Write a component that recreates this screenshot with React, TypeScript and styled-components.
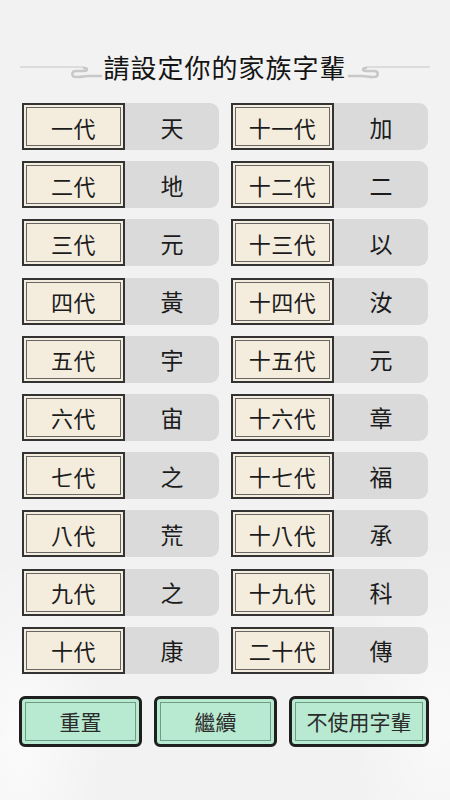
import React from "react";
import styled, { createGlobalStyle } from "styled-components";

const GlobalStyle = createGlobalStyle`
  html, body {
    margin: 0;
    padding: 0;
    background: #f2f2f2;
  }
  body {
    font-family: "Noto Sans CJK TC", "Noto Sans CJK SC", "Noto Sans", sans-serif;
  }
`;

const Page = styled.div`
  width: 450px;
  height: 800px;
  overflow: hidden;
  background:
    radial-gradient(ellipse 120px 260px at 20px 740px, rgba(255, 255, 255, 0.7), transparent 70%),
    radial-gradient(ellipse 120px 260px at 440px 720px, rgba(255, 255, 255, 0.6), transparent 70%),
    #f2f2f2;
  display: flex;
  flex-direction: column;
  align-items: center;
`;

const Header = styled.div`
  margin-top: 50px;
  height: 34px;
  width: 410px;
  display: flex;
  align-items: center;
  justify-content: space-between;
`;

const Title = styled.h1`
  margin: 0;
  font-size: 26px;
  font-weight: 400;
  letter-spacing: 1px;
  line-height: 34px;
  color: #141414;
  white-space: nowrap;
`;

const Grid = styled.div`
  margin-top: 19px;
  width: 406px;
  display: grid;
  grid-template-columns: 197px 197px;
  column-gap: 12px;
  row-gap: 11.2px;
`;

const Row = styled.div`
  height: 47px;
  display: flex;
  background: #dadada;
  border-radius: 0 9px 9px 0;
`;

const Label = styled.div`
  width: 103px;
  box-sizing: border-box;
  flex-shrink: 0;
  display: flex;
  align-items: center;
  justify-content: center;
  background: #f4eddd;
  border: 2px solid #333;
  box-shadow: inset 0 0 0 2px #f4eddd, inset 0 0 0 3px #666;
  font-size: 22px;
  color: #1c1c1c;
  letter-spacing: 0.5px;
`;

const Value = styled.div`
  flex: 1;
  display: flex;
  align-items: center;
  justify-content: center;
  font-size: 23px;
  color: #1c1c1c;
`;

const Actions = styled.div`
  margin-top: 22px;
  width: 412px;
  display: flex;
  gap: 12px;
`;

const Button = styled.button<{ $wide?: boolean }>`
  width: ${(p) => (p.$wide ? 140 : 123)}px;
  height: 51px;
  box-sizing: border-box;
  padding: 0;
  background: #b8e9d1;
  border: 3px solid #1f1f1f;
  border-radius: 6px;
  box-shadow: inset 0 0 0 3px #b8e9d1, inset 0 0 0 4px #6f9b87;
  font-family: inherit;
  font-size: 21px;
  color: #2c2c2c;
  cursor: pointer;
`;

const Ornament = ({ flip }: { flip?: boolean }) => (
  <svg
    width="82"
    height="30"
    viewBox="0 0 82 30"
    style={flip ? { transform: "scaleX(-1)" } : undefined}
  >
    <line x1="0" y1="15" x2="64" y2="15" stroke="#d4d4d4" strokeWidth="1.5" />
    <path
      d="M82 24 H68 C64 24 62 25 58 25 H56 C51 25 51 19 56 19 H64 C68 19 68 16 64 16"
      fill="none"
      stroke="#c8c8c8"
      strokeWidth="2.5"
      strokeLinecap="round"
    />
  </svg>
);

const generations = [
  ["一代", "天", "十一代", "加"],
  ["二代", "地", "十二代", "二"],
  ["三代", "元", "十三代", "以"],
  ["四代", "黃", "十四代", "汝"],
  ["五代", "宇", "十五代", "元"],
  ["六代", "宙", "十六代", "章"],
  ["七代", "之", "十七代", "福"],
  ["八代", "荒", "十八代", "承"],
  ["九代", "之", "十九代", "科"],
  ["十代", "康", "二十代", "傳"],
];

const App = () => {
  return (
    <Page>
      <GlobalStyle />
      <Header>
        <Ornament />
        <Title>請設定你的家族字輩</Title>
        <Ornament flip />
      </Header>
      <Grid>
        {generations.map(([l1, v1, l2, v2]) => (
          <React.Fragment key={l1}>
            <Row>
              <Label>{l1}</Label>
              <Value>{v1}</Value>
            </Row>
            <Row>
              <Label>{l2}</Label>
              <Value>{v2}</Value>
            </Row>
          </React.Fragment>
        ))}
      </Grid>
      <Actions>
        <Button>重置</Button>
        <Button>繼續</Button>
        <Button $wide>不使用字輩</Button>
      </Actions>
    </Page>
  );
};

export default App;
